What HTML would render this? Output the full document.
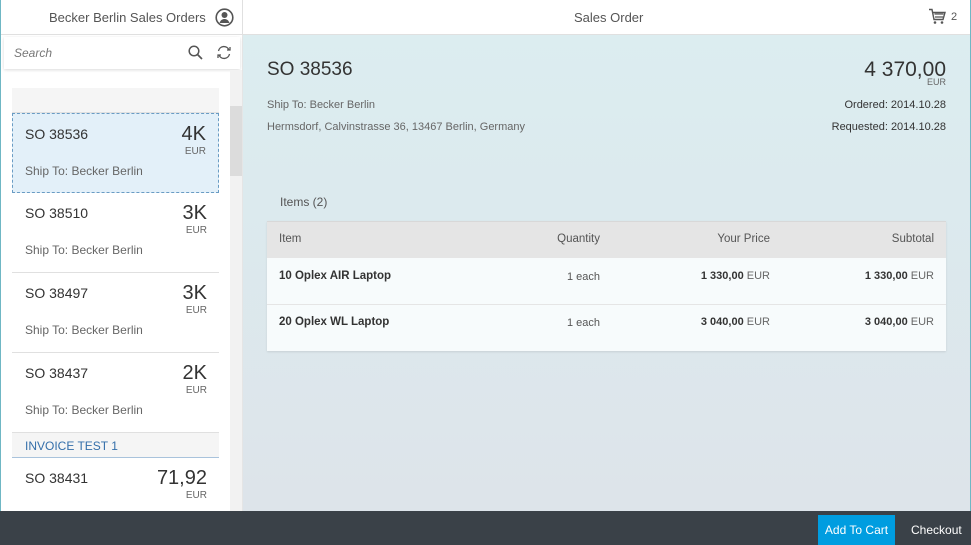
<!DOCTYPE html>
<html><head><meta charset="utf-8"><style>
*{margin:0;padding:0;box-sizing:border-box}
body{width:971px;height:545px;overflow:hidden;font-family:"Liberation Sans",Arial,sans-serif;position:relative;background:#fff;color:#333}
.a{position:absolute}
.hdr{top:0;height:35px;background:#fff;border-bottom:1px solid #e0e0e0}
.item{left:12px;width:207px;height:80px;border-bottom:1px solid #e0e0e0;background:#fff}
.item .t{position:absolute;left:12px;top:12px;font-size:14px;color:#333}
.item .n{position:absolute;right:12px;top:9px;font-size:20px;color:#333}
.item .c{position:absolute;right:12px;top:32px;font-size:10px;color:#666}
.item .s{position:absolute;left:12px;top:50px;font-size:12px;color:#666}
</style></head><body>
<div class="a" style="left:0;top:0;width:1px;height:545px;background:#6fb7c4"></div>
<div class="a" style="left:970px;top:0;width:1px;height:545px;background:#6fb7c4"></div>
<div class="a hdr" style="left:1px;width:242px;border-right:1px solid #e0e0e0"></div>
<div class="a" style="left:49px;top:10px;font-size:13px;color:#555">Becker Berlin Sales Orders</div>
<svg class="a" style="left:215px;top:8px" width="19" height="19" viewBox="0 0 19 19"><circle cx="9.5" cy="9.5" r="8.3" fill="none" stroke="#555" stroke-width="1.6"/><circle cx="9.5" cy="7" r="3" fill="#555"/><path d="M4.5 15c1-3 3-4 5-4s4 1 5 4z" fill="#555"/></svg>
<div class="a hdr" style="left:243px;width:727px"></div>
<div class="a" style="left:574px;top:10px;font-size:13px;color:#555">Sales Order</div>
<svg class="a" style="left:928px;top:8px" width="18" height="17" viewBox="0 0 18 17"><path d="M1 1.5h3l2 10h9l2-7H5" fill="none" stroke="#555" stroke-width="1.4"/><path d="M6.5 6h9M7 9h8" stroke="#555" stroke-width="1.2"/><circle cx="7" cy="14.5" r="1.3" fill="#555"/><circle cx="14" cy="14.5" r="1.3" fill="#555"/></svg>
<div class="a" style="left:951px;top:11px;font-size:11px;color:#555">2</div>
<div class="a" style="left:1px;top:35px;width:242px;height:476px;background:#fff;border-right:1px solid #e5e5e5"></div>
<div class="a" style="left:4px;top:37px;width:236px;height:32px;background:#fff;box-shadow:0 1px 3px rgba(0,0,0,.15)"></div>
<div class="a" style="left:14px;top:46px;font-size:12px;font-style:italic;color:#777">Search</div>
<svg class="a" style="left:188px;top:45px" width="15" height="15" viewBox="0 0 15 15"><circle cx="6" cy="6" r="4.8" fill="none" stroke="#555" stroke-width="1.5"/><path d="M9.5 9.5l4.5 4.5" stroke="#555" stroke-width="1.7"/></svg>
<svg class="a" style="left:216px;top:45px" width="16" height="15" viewBox="0 0 16 15"><path d="M2.5 6A5.5 5.5 0 0 1 13 5M13.5 9A5.5 5.5 0 0 1 3 10" fill="none" stroke="#555" stroke-width="1.3"/><path d="M11 5h3V2M5 10H2v3" fill="none" stroke="#555" stroke-width="1.3"/></svg>
<div class="a" style="left:230px;top:70px;width:12px;height:441px;background:#f2f2f2"></div>
<div class="a" style="left:230px;top:106px;width:12px;height:70px;background:#dcdcdc"></div>
<div class="a" style="left:12px;top:88px;width:207px;height:25px;background:#f5f5f5;border-bottom:1px solid #e0e0e0"></div>
<div class="a item" style="top:113px;background:#e3f0f9;border:1px dashed #6a9cc4"><div class="t">SO 38536</div><div class="n">4K</div><div class="c">EUR</div><div class="s">Ship To: Becker Berlin</div></div>
<div class="a item" style="top:193px"><div class="t" style="left:13px">SO 38510</div><div class="n">3K</div><div class="c">EUR</div><div class="s" style="left:13px">Ship To: Becker Berlin</div></div>
<div class="a item" style="top:273px"><div class="t" style="left:13px">SO 38497</div><div class="n">3K</div><div class="c">EUR</div><div class="s" style="left:13px">Ship To: Becker Berlin</div></div>
<div class="a item" style="top:353px"><div class="t" style="left:13px">SO 38437</div><div class="n">2K</div><div class="c">EUR</div><div class="s" style="left:13px">Ship To: Becker Berlin</div></div>
<div class="a" style="left:12px;top:433px;width:207px;height:25px;background:#f5f5f5;border-bottom:1px solid #a9c3dc"><div style="position:absolute;left:13px;top:6px;font-size:12px;color:#346faa">INVOICE TEST 1</div></div>
<div class="a item" style="top:458px;height:53px;border:none"><div class="t" style="left:13px">SO 38431</div><div class="n">71,92</div><div class="c">EUR</div></div>
<div class="a" style="left:243px;top:35px;width:727px;height:476px;background:linear-gradient(#dcedf0,#dde4ea)"></div>
<div class="a" style="left:267px;top:59px;font-size:19px;color:#333">SO 38536</div>
<div class="a" style="left:267px;top:99px;font-size:11px;color:#666">Ship To: Becker Berlin</div>
<div class="a" style="left:267px;top:121px;font-size:11px;color:#666">Hermsdorf, Calvinstrasse 36, 13467 Berlin, Germany</div>
<div class="a" style="right:25px;top:58px;font-size:21px;color:#333">4 370,00</div>
<div class="a" style="right:25px;top:77px;font-size:9px;color:#666">EUR</div>
<div class="a" style="right:25px;top:99px;font-size:11px;color:#333">Ordered: 2014.10.28</div>
<div class="a" style="right:25px;top:121px;font-size:11px;color:#333">Requested: 2014.10.28</div>
<div class="a" style="left:280px;top:195px;font-size:12px;color:#555">Items (2)</div>
<div class="a" style="left:267px;top:221px;width:679px;height:130px;box-shadow:0 1px 2px rgba(0,0,0,.1)">
<div style="height:37px;background:#e5e5e5;border-top:1px solid #d8d8d8;position:relative;font-size:11.5px;color:#555">
<span class="a" style="left:12px;top:11px">Item</span><span class="a" style="right:346px;top:11px">Quantity</span><span class="a" style="right:176px;top:11px">Your Price</span><span class="a" style="right:12px;top:11px">Subtotal</span></div>
<div style="height:47px;background:#f7fbfc;border-bottom:1px solid #e5e5e5;position:relative;font-size:11px;color:#333">
<b class="a" style="left:12px;top:12px;font-size:11.5px">10 Oplex AIR Laptop</b><span class="a" style="right:346px;top:13px;color:#555">1 each</span><span class="a" style="right:176px;top:12px"><b>1 330,00</b> <span style="color:#666">EUR</span></span><span class="a" style="right:12px;top:12px"><b>1 330,00</b> <span style="color:#666">EUR</span></span></div>
<div style="height:46px;background:#f7fbfc;position:relative;font-size:11px;color:#333">
<b class="a" style="left:12px;top:11px;font-size:11.5px">20 Oplex WL Laptop</b><span class="a" style="right:346px;top:12px;color:#555">1 each</span><span class="a" style="right:176px;top:11px"><b>3 040,00</b> <span style="color:#666">EUR</span></span><span class="a" style="right:12px;top:11px"><b>3 040,00</b> <span style="color:#666">EUR</span></span></div>
</div>
<div class="a" style="left:0;top:511px;width:971px;height:34px;background:#3a4148"></div>
<div class="a" style="left:818px;top:515px;width:77px;height:30px;background:#009de0;color:#fff;font-size:12px;text-align:center;line-height:30px">Add To Cart</div>
<div class="a" style="left:911px;top:523px;font-size:12px;color:#fff">Checkout</div>
</body></html>
